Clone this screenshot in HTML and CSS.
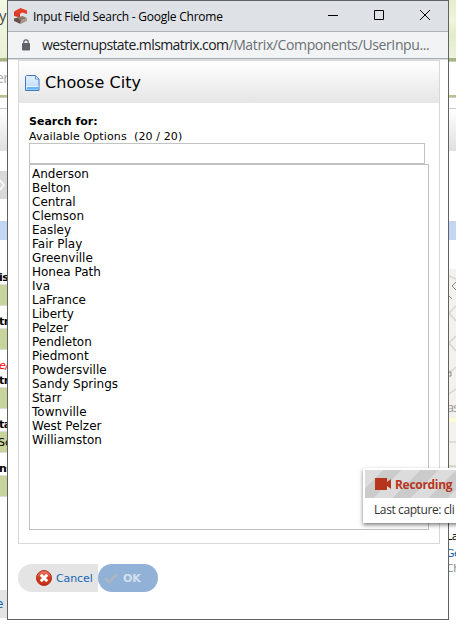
FILE: index.html
```html
<!DOCTYPE html>
<html lang="en">
<head>
<meta charset="utf-8">
<title>Input Field Search</title>
<link rel="stylesheet" href="styles.css">
</head>
<body>
<div class="desktop">
  <div class="strip strip-left">
    <div class="banner"><span>y</span></div>
    <div class="search-row grey-text"><span>er</span></div>
    <div class="gap-top"></div>
    <div class="toolbar"></div>
    <div class="space-20"></div>
    <div class="crumb"><svg width="7" height="28" viewBox="0 0 7 28"><path d="M0 9 4 14 0 19" fill="none" stroke="#fff" stroke-width="1.5"/></svg></div>
    <div class="space-22"></div>
    <div class="blue-bar"></div>
    <div class="label label-first">is</div>
    <div class="field"></div>
    <div class="label">tr</div>
    <div class="field"></div>
    <div class="label label-note"><em>e/</em><span>tr</span></div>
    <div class="field"></div>
    <div class="label">ta</div>
    <div class="field">Sc</div>
    <div class="label">ns</div>
    <div class="field"></div>
    <div class="space-grow"></div>
    <div class="footer-chip">e</div>
  </div>

  <main class="window">
    <header class="titlebar">
      <svg class="logo" width="16" height="18" viewBox="0 0 16 18">
        <path d="M1 4.500 7.500 1l6.500 2.500V7L9 5.500 7 7z" fill="#e63e27"/>
        <path d="M1 4.500l6 2V10.500L1 9z" fill="#d63a26"/>
        <path d="M1 11.500 5 10.500l3 3L7.500 17 1 14z" fill="#65524a"/>
        <path d="M4 10.500 9.500 9l4.500 2-6 2.500z" fill="#8c776a"/>
        <path d="M8 13.500 14 11v3l-6.500 3z" fill="#a8978a"/>
      </svg>
      <span class="title">Input Field Search - Google Chrome</span>
      <svg class="controls" width="104" height="12" viewBox="0 0 104 12" fill="none" stroke="#000">
        <path d="M0 6.500h10M46.500 1.500h9v9h-9zM92 1l10 10M102 1 92 11"/>
      </svg>
    </header>
    <div class="address">
      <svg class="lock" width="10" height="12" viewBox="0 0 10 12">
        <rect x="1" y="4" width="8" height="7.500" rx="1" fill="#5f6368"/>
        <path d="M2.800 5V3a2.200 2.200 0 0 1 4.400 0v2" fill="none" stroke="#5f6368" stroke-width="1.200"/>
      </svg>
      <span class="host">westernupstate.mlsmatrix.com</span><span class="path">/Matrix/Components/UserInpu...</span>
    </div>
    <section class="content">
      <div class="panel">
        <div class="panel-head">
          <svg width="15" height="17" viewBox="0 0 15 17">
            <defs><linearGradient id="paper" x2="0" y2="1"><stop stop-color="#e4f1ff"/><stop offset="1" stop-color="#b9dafb"/></linearGradient></defs>
            <path d="M1.500.500h9l3.500 3.500v11.500H.500V1.500z" fill="url(#paper)" stroke="#4478c4"/>
            <path d="M10.500.500V4h3.500z" fill="#fff" stroke="#4478c4" stroke-width=".8"/>
            <path d="M2 12h11v2.500H2z" fill="#65b8f8"/>
            <path d="M1 11.500h12.500" stroke="#eef7ff"/>
          </svg>
          <h1>Choose City</h1>
        </div>
        <div class="panel-body">
          <label class="search-label" for="search">Search for:</label>
          <p class="available">Available Options&nbsp; (20 / 20)</p>
          <input id="search" class="search" type="text">
          <ul class="options">
            <li>Anderson</li><li>Belton</li><li>Central</li><li>Clemson</li><li>Easley</li>
            <li>Fair Play</li><li>Greenville</li><li>Honea Path</li><li>Iva</li><li>LaFrance</li>
            <li>Liberty</li><li>Pelzer</li><li>Pendleton</li><li>Piedmont</li><li>Powdersville</li>
            <li>Sandy Springs</li><li>Starr</li><li>Townville</li><li>West Pelzer</li><li>Williamston</li>
          </ul>
        </div>
      </div>
      <div class="actions">
        <button class="cancel">
          <svg width="16" height="16" viewBox="0 0 16 16">
            <defs><linearGradient id="red" x2="0" y2="1"><stop stop-color="#e9826b"/><stop offset=".5" stop-color="#d2391d"/><stop offset="1" stop-color="#c92c10"/></linearGradient></defs>
            <circle cx="8" cy="8" r="7.500" fill="url(#red)" stroke="#b5301c"/>
            <path d="M4.800 4.800l6.400 6.400M11.200 4.800l-6.400 6.400" stroke="#fff" stroke-width="3"/>
          </svg>
          <span>Cancel</span>
        </button>
        <button class="ok">
          <svg width="14" height="12" viewBox="0 0 14 12"><path d="M1 6l4 4 8-8" fill="none" stroke="#a9b7c4" stroke-width="3"/></svg>
          <span>OK</span>
        </button>
      </div>
    </section>
  </main>

  <div class="strip strip-right">
    <div class="banner"></div>
    <div class="search-row"></div>
    <div class="gap-top"></div>
    <div class="toolbar"></div>
    <div class="space-70"></div>
    <div class="blue-bar"></div>
    <div class="space-29"></div>
    <svg class="map" width="7" height="254" viewBox="0 0 7 254">
      <path fill="#f4f1ee" d="M0 0h7v254H0z"/>
      <path d="M0 7l7 3M0 44l7-7M0 44l7 8M0 74l7-7M0 74l7 8M0 104l7-6M0 125l7-5M0 173h7M0 197h7M0 243l7 2" fill="none" stroke="#d9d6d0" stroke-width="1.500"/>
      <path d="M7 13 3 17l4 4M0 27l3 3M0 103h2v4H0" fill="none" stroke="#888"/>
      <path d="M0 151h7" stroke="#fffbd5" stroke-width="4"/>
      <text x="-2" y="143">as</text>
    </svg>
    <div class="side-text"><span>La</span><span class="link">Ge</span><span class="muted">Ch</span></div>
  </div>
</div>

<aside class="toast">
  <div class="toast-head">
    <svg width="17" height="12" viewBox="0 0 17 12"><path d="M0 0h12v4l4-3v10l-4-3v4H0z" fill="#b8351d"/></svg>
    <span>Recording</span>
  </div>
  <div class="toast-body">Last capture: cli</div>
</aside>
</body>
</html>
```

FILE: styles.css
```css
* { box-sizing: border-box; }
body {
  margin: 0;
  width: 456px;
  height: 627px;
  overflow: hidden;
  position: relative;
  background: #fff;
  color: #000;
  font: 12px/14px "DejaVu Sans", Verdana, sans-serif;
}
.desktop { display: grid; grid-template-columns: 7px 442px 7px; height: 627px; }

/* page behind the popup */
.strip { display: flex; flex-direction: column; overflow: hidden; height: 627px; white-space: nowrap; }
.strip > * { flex: none; overflow: hidden; }
.banner { height: 61px; background: linear-gradient(#f4f8e4, #e9f1d3); border-bottom: 3px solid #a4b47c; }
.strip-right .banner { background: linear-gradient(#e4edca, #f0f5dc 35%, #e2ecc9 60%, #edf3df); }
.banner span { display: block; margin: 7px 0 0 -1px; font: 15px/16px "Open Sans", sans-serif; color: #444; }
.search-row { height: 36px; border-top: 1px solid #ccc; border-bottom: 2px solid #b4c587; }
.grey-text span { display: block; margin: 8px 0 0 -4px; font: 14px/15px "Open Sans", sans-serif; color: #aaa; letter-spacing: -.5px; }
.gap-top { height: 11px; border-top: 1px solid #ccc; }
.toolbar { height: 43px; border-top: 1px solid #ccc; background: linear-gradient(#fff, #e0e0e0); }
.space-20 { height: 20px; }
.crumb { height: 28px; background: #d9d9d9; }
.space-22 { height: 22px; }
.blue-bar { height: 19px; background: #c3d7f5; }
.space-grow { height: 93px; }
.space-70 { height: 70px; }
.space-29 { height: 29px; }
.label { height: 22px; padding-top: 9px; font: bold 11px/13px "DejaVu Sans", sans-serif; letter-spacing: -.5px; text-indent: -1px; }
.label-first { height: 44px; padding-top: 31px; }
.label-note { height: 37px; padding-top: 9px; }
.label-note em, .label-note span { display: block; }
.label-note span { margin-top: 2px; }
.label-note em { font-weight: normal; color: #f00; }
.field { height: 22px; border: solid #ddd; border-width: 1px 0; background: #c7d49b; line-height: 21px; font-size: 11px; text-indent: -2px; }
.footer-chip { height: 28px; background: #e4e4e4; color: #1464b4; line-height: 28px; text-indent: -4px; }
.map text { font: 13px "Open Sans", sans-serif; fill: #999; letter-spacing: -1px; }
.side-text { padding-top: 5px; font: 11px/17px "DejaVu Sans", sans-serif; }
.side-text span { display: block; margin-left: -3px; letter-spacing: -.5px; }
.side-text .link { color: #1464b4; }
.side-text .muted { color: #888; line-height: 14px; }

/* popup */
.window { height: 620px; border: 1px solid #606163; background: #fff; overflow: hidden; }
.titlebar { display: flex; align-items: center; height: 31px; padding: 0 16px 0 5px; background: #dee1e6; border-bottom: 1px solid #aeb0b3; }
.logo { flex: none; margin-bottom: 1px; }
.title { margin-left: 4px; padding-top: 1px; font: 12px/16px "Open Sans", sans-serif; letter-spacing: -.24px; white-space: nowrap; }
.controls { flex: none; margin-left: auto; margin-bottom: 2px; }
.address { display: flex; align-items: center; height: 27px; padding-left: 13px; background: #f1f3f4; border-bottom: 1px solid #a9abae; font: 14px/18px "Open Sans", sans-serif; letter-spacing: -.59px; white-space: nowrap; }
.lock { flex: none; margin-right: 11px; }
.host { color: #202124; }
.path { color: #6c7074; letter-spacing: -.38px; }
.content { padding: 0 8px 0 10px; border-top: 1px solid #dcdcdc; }
.panel { height: 484px; border: 1px solid #d8d8d8; }
.panel-head { display: flex; align-items: center; height: 42px; padding: 2px 0 0 6px; background: linear-gradient(#fff, #e5e5e5); }
h1 { margin: 0 0 0 5px; font: 16px/20px "DejaVu Sans", sans-serif; letter-spacing: .05px; white-space: nowrap; }
.panel-body { padding: 11px 10px 0; }
.search-label { display: block; font: bold 11px/15px "DejaVu Sans", sans-serif; }
.available { margin: 0; padding-top: 1px; font-size: 11px; line-height: 13px; letter-spacing: .12px; }
.search { display: block; width: 396px; height: 21px; margin: 0; border: 1px solid #c3c3c3; padding: 0 3px; outline: 0; }
.options { width: 400px; height: 366px; margin: 0; padding: 2px; border: 1px solid #c0c0c0; list-style: none; font-size: 12px; line-height: 14px; }
.actions { display: flex; margin-top: 20px; }
button { display: flex; align-items: center; height: 28px; border: 0; font: 12px/14px "DejaVu Sans", sans-serif; white-space: nowrap; }
.cancel { width: 80px; padding: 0 0 0 18px; border-radius: 14px 0 0 14px; background: #e4e4e4; color: #1464b4; }
.cancel span { margin-left: 4px; padding-top: 2px; font-size: 11px; letter-spacing: -.1px; }
.ok { width: 60px; padding: 0 0 0 6px; border-radius: 14px; background: #92b1d6; color: #d5e0ef; }
.ok span { margin-left: 5px; padding-top: 1px; font-weight: bold; font-size: 11px; }

/* capture notice */
.toast { position: absolute; left: 363px; top: 468px; width: 110px; height: 55px; padding: 2px; background: #fff; box-shadow: 0 2px 4px rgba(0,0,0,.5); white-space: nowrap; }
.toast-head { display: flex; align-items: center; height: 28px; padding-left: 10px; background: repeating-linear-gradient(135deg, #dcdcdc 0 13px, #cbcbcb 13px 26px); font: bold 12px/16px "Open Sans", sans-serif; color: #b8351d; }
.toast-head span { margin: 2px 0 0 3px; letter-spacing: -.3px; }
.toast-body { padding-left: 9px; font: 12px/23px "Open Sans", sans-serif; letter-spacing: -.4px; color: #333; }
```
